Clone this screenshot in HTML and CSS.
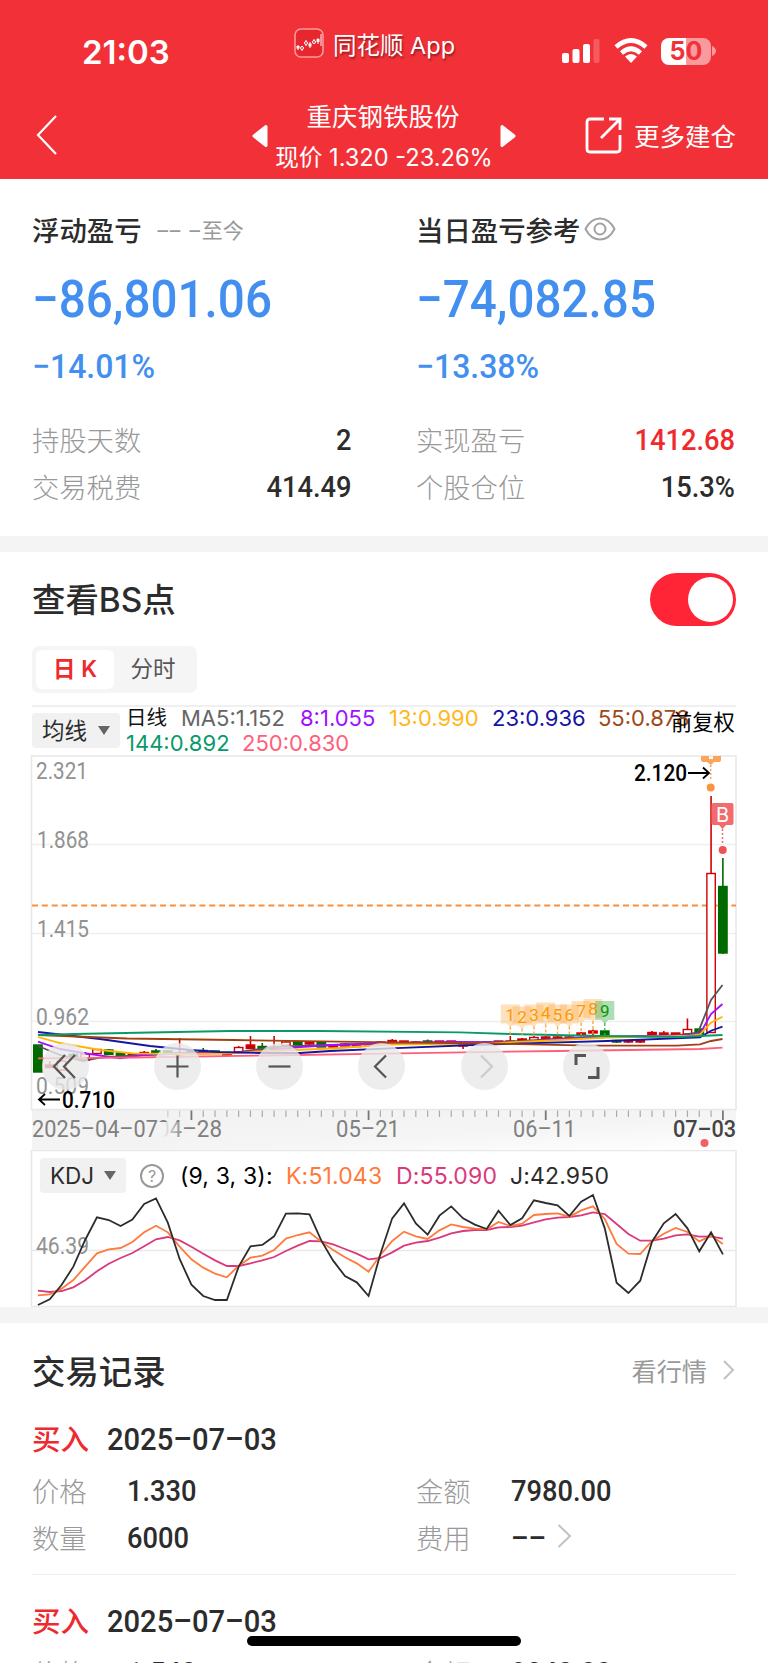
FILE: index.html
```
<!DOCTYPE html>
<html lang="zh-CN">
<head>
    <meta charset="UTF-8">
    <title>重庆钢铁股份</title>
    <link rel="stylesheet" href="styles.css">
</head>
<body>
    <header class="header">
        <div class="status">
            <div class="time">21:03</div>
            <div class="app-tag">
                <svg width="31" height="31" viewBox="0 0 31 31">
                    <rect x="1" y="1" width="28" height="28" rx="6" fill="#e8262d" stroke="#f99a9c" stroke-width="1.6"/>
                    <path d="M4 17v5M8 18v5M12 12v6M16 14v6M20 11v5M24 10v6M27 6v12" stroke="#fff" stroke-width="1"/>
                    <path d="M2.500 18h3v2.500h-3zM14.500 15.500h3v3h-3zM22.500 11h3v3h-3z" fill="#fff"/>
                    <circle cx="8" cy="20" r="1.500" fill="#e8262d" stroke="#fff"/>
                    <circle cx="12" cy="15" r="1.500" fill="#e8262d" stroke="#fff"/>
                    <circle cx="20" cy="14" r="1.500" fill="#e8262d" stroke="#fff"/>
                </svg>
                <span>同花顺 App</span>
            </div>
            <div class="signals">
                <svg width="40" height="26" viewBox="0 0 40 26">
                    <rect x="1" y="15" width="7" height="10" rx="2" fill="#fff"/>
                    <rect x="11.500" y="11" width="7" height="14" rx="2" fill="#fff"/>
                    <rect x="22" y="6" width="7" height="19" rx="2" fill="#fff"/>
                    <rect x="32.500" y="1" width="6" height="24" rx="2" fill="#f55a5f"/>
                </svg>
                <svg class="wifi" width="34" height="26" viewBox="0 0 34 26">
                    <g fill="none" stroke="#fff" stroke-width="4.600">
                        <path d="M2 9Q17-4 32 9"/>
                        <path d="M7.500 15Q17 6.500 26.500 15"/>
                    </g>
                    <path d="M11 18.500Q17 13.500 23 18.500L17 25z" fill="#fff"/>
                </svg>
                <div class="battery">50</div>
                <svg class="nub" width="4" height="10" viewBox="0 0 4 10"><path d="M0 0Q4 2 4 5T0 10z" fill="#f99a9c"/></svg>
            </div>
        </div>
        <nav class="nav">
            <svg class="back" width="22" height="42" viewBox="0 0 22 42"><path d="M20 2L2 21L20 40" fill="none" stroke="#fff" stroke-width="2.200"/></svg>
            <div class="stock">
                <svg width="17" height="22" viewBox="0 0 17 22"><path d="M14 1.500L2 11L14 20.500z" fill="#fff" stroke="#fff" stroke-width="3" stroke-linejoin="round"/></svg>
                <div class="stock-name">
                    <div class="name">重庆钢铁股份</div>
                    <div class="price">现价 1.320 -23.26%</div>
                </div>
                <svg width="17" height="22" viewBox="0 0 17 22"><path d="M3 1.500L15 11L3 20.500z" fill="#fff" stroke="#fff" stroke-width="3" stroke-linejoin="round"/></svg>
            </div>
            <div class="more">
                <svg width="38" height="38" viewBox="0 0 38 38" fill="none" stroke="#fff" stroke-width="2.800">
                    <path d="M19 2H5Q2 2 2 5V32Q2 35 5 35H32Q35 35 35 32V18M24 2H35V13M35 2L16 21"/>
                </svg>
                <span>更多建仓</span>
            </div>
        </nav>
    </header>

    <section class="summary">
        <div class="col">
            <div class="title">浮动盈亏 <span class="since"><i>–– –</i>至今</span></div>
            <div class="big"><span>−86,801.06</span></div>
            <div class="pct"><span>−14.01%</span></div>
            <div class="row"><label>持股天数</label><b>2</b></div>
            <div class="row"><label>交易税费</label><b>414.49</b></div>
        </div>
        <div class="col">
            <div class="title">当日盈亏参考
                <svg width="32" height="24" viewBox="0 0 32 24" fill="none" stroke="#a2a2a2" stroke-width="2">
                    <path d="M1.500 12C5 5 10 1.500 16 1.500S27 5 30.500 12C27 19 22 22.500 16 22.500S5 19 1.500 12z"/>
                    <circle cx="16" cy="12" r="5.500"/>
                </svg>
            </div>
            <div class="big"><span>−74,082.85</span></div>
            <div class="pct"><span>−13.38%</span></div>
            <div class="row"><label>实现盈亏</label><b class="red">1412.68</b></div>
            <div class="row"><label>个股仓位</label><b>15.3%</b></div>
        </div>
    </section>

    <section class="chart">
        <div class="chart-head">
            <h2>查看BS点</h2>
            <div class="toggle"><i></i></div>
        </div>
        <div class="tabs">
            <span class="tab active">日 K</span>
            <span class="tab">分时</span>
        </div>
        <div class="ma-bar">
            <div class="select">均线 <i></i></div>
            <div class="ma">
                <div class="ma-row">
                    <span class="w-day">日线</span>
                    <span class="w-ma5">MA5:1.152</span>
                    <span class="w-ma8">8:1.055</span>
                    <span class="w-ma13">13:0.990</span>
                    <span class="w-ma23">23:0.936</span>
                    <span class="w-ma55">55:0.878</span>
                </div>
                <div class="ma-row">
                    <span class="w-ma144">144:0.892</span>
                    <span class="w-ma250">250:0.830</span>
                </div>
            </div>
            <div class="fq">前复权</div>
        </div>

        <div class="kline">
            <svg width="768" height="395" viewBox="0 755 768 395">
                <defs>
                    <linearGradient id="axisBg" x1="0" y1="0" x2="1" y2="1">
                        <stop offset="0" stop-color="#f1f1f1"/>
                        <stop offset=".6" stop-color="#f5f5f5"/>
                        <stop offset="1" stop-color="#fff"/>
                    </linearGradient>
                    <linearGradient id="fade" x1="0" x2="1">
                        <stop offset="0" stop-color="#f3f3f3"/>
                        <stop offset=".75" stop-color="#f3f3f3"/>
                        <stop offset="1" stop-color="#f3f3f3" stop-opacity="0"/>
                    </linearGradient>
                </defs>
                <rect x="32" y="1110" width="704" height="40" fill="url(#axisBg)"/>
                <path d="M32 844.500H736M32 933.500H736M32 1021.500H736" stroke="#efefef" stroke-width="1.500"/>
                <path d="M31.500 1109.500V756H736V1109.500z" fill="none" stroke="#e8e8e8" stroke-width="1.500"/>
                <path d="M32 905.500H736" stroke="#f98f3a" stroke-width="2" stroke-dasharray="6 3.850"/>
                <g class="ylabel">
                    <text x="36" y="779" textLength="52" lengthAdjust="spacingAndGlyphs">2.321</text>
                    <text x="37" y="848" textLength="52" lengthAdjust="spacingAndGlyphs">1.868</text>
                    <text x="37" y="937" textLength="52" lengthAdjust="spacingAndGlyphs">1.415</text>
                    <text x="36" y="1025" textLength="53" lengthAdjust="spacingAndGlyphs">0.962</text>
                    <text x="36" y="1094" textLength="53" lengthAdjust="spacingAndGlyphs">0.509</text>
                </g>
                <g id="candles"></g>
                <g class="lines">
                    <polyline stroke="#555" points="38,1046 60,1055 83,1061 100,1057.700 143,1055 183,1053.500 233,1053 273,1047 300,1046 333,1045 390,1043 450,1042.500 500,1042 540,1040 590,1037 673,1036 698,1032.700 705,1015 711,1000 722.500,985"/>
                    <polyline stroke="#a010ff" points="38,1041.700 60,1049 83,1053 120,1058.300 143,1055 183,1053 233,1052.700 267,1050.700 300,1047 333,1045 400,1043 457,1042 507,1042.700 557,1039.300 607,1037 690,1035 700,1034 711,1014 722.500,1004"/>
                    <polyline stroke="#ffb400" points="38,1037 60,1043 100,1050 133,1053.300 183,1054 233,1053.300 267,1051 333,1048.500 390,1044.500 490,1043.300 540,1041 607,1037.700 690,1035.700 700,1034.300 711,1022.700 722.500,1016.700"/>
                    <polyline stroke="#1515a5" points="38,1032 100,1039 150,1046 190,1050 220,1052 260,1053 300,1053 330,1051 390,1048.300 473,1045 607,1041 700,1037.300 711,1030.700 722.500,1026.700"/>
                    <polyline stroke="#a04010" points="38,1035 127,1038.500 233,1040 390,1042.300 490,1043.500 590,1045.700 677,1045.700 700,1044.300 711,1041 722.500,1039"/>
                    <polyline stroke="#0a9a6a" points="38,1035 75,1034 150,1032.500 230,1031 320,1031 460,1032.300 510,1034 600,1036 680,1037 700,1036 722.500,1035"/>
                    <polyline stroke="#ff5f7a" points="38,1058.300 133,1057.500 267,1055.500 400,1053.300 557,1051 700,1049 722.500,1047.700"/>
                </g>
                <g id="tags"></g>
                <g id="ticks"></g>

                <path d="M701 756H709V759H713V756H721V760Q721 762 719 762H714L711 765L707 762H703Q701 762 701 760z" fill="#fda35a"/>
                <path d="M710.700 765V780" stroke="#fda35a" stroke-width="1.500" stroke-dasharray="2 2"/>
                <circle cx="710.700" cy="787.500" r="4" fill="#fb9440"/>
                <path d="M713.500 803H731.500Q733.500 803 733.500 805V823Q733.500 825 731.500 825H726L722.500 829L719 825H713.500Q711.500 825 711.500 823V805Q711.500 803 713.500 803z" fill="#f26b6e"/>
                <text class="b-tag" x="722.500" y="821.500">B</text>
                <path d="M722.500 829V845" stroke="#f26b6e" stroke-width="1.500" stroke-dasharray="2 2"/>
                <circle cx="722.700" cy="850" r="4" fill="#ef5256"/>

                <g class="extreme">
                    <text x="634" y="781" textLength="53" lengthAdjust="spacingAndGlyphs">2.120</text>
                    <path d="M688 773H709M703 767.500L709 773L703 778.500"/>
                    <text x="62" y="1108" textLength="53" lengthAdjust="spacingAndGlyphs">0.710</text>
                    <path d="M60 1099.500H39M45 1094L39 1099.500L45 1105"/>
                </g>

                <g class="xlabel">
                    <text x="157" y="1137" textLength="65" lengthAdjust="spacingAndGlyphs">04–28</text>
                    <rect x="100" y="1122" width="84" height="26" fill="url(#fade)"/>
                    <text x="32" y="1137" textLength="126" lengthAdjust="spacingAndGlyphs">2025–04–07</text>
                    <text x="336" y="1137" textLength="64" lengthAdjust="spacingAndGlyphs">05–21</text>
                    <text x="513" y="1137" textLength="63" lengthAdjust="spacingAndGlyphs">06–11</text>
                    <text class="last" x="673" y="1137" textLength="63" lengthAdjust="spacingAndGlyphs">07–03</text>
                </g>
                <circle cx="704.500" cy="1143" r="4" fill="#f26064"/>
            </svg>
            <div class="tools">
                <button class="first"><svg viewBox="0 0 47 47"><path d="M23 12L12 23.500L23 35M33 12L22 23.500L33 35"/></svg></button>
                <button><svg viewBox="0 0 47 47"><path d="M12.500 23.500H34.500M23.500 12.500V34.500"/></svg></button>
                <button><svg viewBox="0 0 47 47"><path d="M12.500 23.500H34.500"/></svg></button>
                <button><svg viewBox="0 0 47 47"><path d="M28 12.500L17 23.500L28 34.500"/></svg></button>
                <button class="off"><svg viewBox="0 0 47 47"><path d="M20 12.500L31 23.500L20 34.500"/></svg></button>
                <button class="thick"><svg viewBox="0 0 47 47"><path d="M13 22V12.500H23M35 24V34.500H25"/></svg></button>
            </div>
        </div>

        <div class="kdj">
            <div class="kdj-bar">
                <div class="select">KDJ <i></i></div>
                <div class="help">?</div>
                <span class="k-par">(9, 3, 3):</span>
                <span class="k-k">K:51.043</span>
                <span class="k-d">D:55.090</span>
                <span class="k-j">J:42.950</span>
            </div>
            <svg width="768" height="157" viewBox="0 0 768 157">
                <path d="M32 100.500H736" stroke="#e8e8e8" stroke-width="1.500"/>
                <path d="M31.500 .5H736V156.500H31.500z" fill="none" stroke="#e8e8e8" stroke-width="1.500"/>
                <g class="ylabel"><text x="36" y="104" textLength="53" lengthAdjust="spacingAndGlyphs">46.39</text></g>
                <g class="lines">
                    <polyline id="lineD" stroke="#d83a7c"/>
                    <polyline id="lineK" stroke="#ff7a3c"/>
                    <polyline id="lineJ" stroke="#2c2c2c"/>
                </g>
            </svg>
        </div>
    </section>

    <section class="trades">
        <div class="trades-head">
            <h2>交易记录</h2>
            <a>看行情 <svg width="12" height="20" viewBox="0 0 12 20"><path d="M1 1L10 10L1 19" fill="none" stroke="#c2c2c2" stroke-width="2"/></svg></a>
        </div>
        <div class="trade">
            <div class="day"><em>买入</em><b>2025–07–03</b></div>
            <div class="cells">
                <div><label>价格</label><b>1.330</b></div>
                <div><label>金额</label><b>7980.00</b></div>
                <div><label>数量</label><b>6000</b></div>
                <div><label>费用</label><b>––</b><svg class="arrow" width="15" height="24" viewBox="0 0 15 24"><path d="M1.500 1L13 12L1.500 23" fill="none" stroke="#c2c2c2" stroke-width="2"/></svg></div>
            </div>
        </div>
        <div class="trade">
            <div class="day"><em>买入</em><b>2025–07–03</b></div>
            <div class="cells">
                <div><label>价格</label><b>1.540</b></div>
                <div><label>金额</label><b>9240.00</b></div>
            </div>
        </div>
    </section>
    <div class="home-bar"></div>

    <script>
        const X0 = 37.9, STEP = 11.81;
        const RED = '#d00000', GREEN = '#006a00';

        // [indice, tipo, arriba, abajo, mecha arriba, mecha abajo]  tipo: g = verde, r = rojo, h = rojo hueco
        const candles = [
            [0,'g',1045,1072,1045,1072],[1,'r',1065,1067.500,1061,1068],[2,'h',1061,1070,1058,1070],[3,'g',1054.500,1056.500,1053,1058],
            [4,'h',1054,1060,1052,1061],[5,'h',1049.500,1053.500,1049,1054],[6,'g',1050,1054.500,1049,1055],[7,'g',1053,1056,1052,1057],
            [8,'r',1054,1055.500,1053,1056],[9,'r',1052.500,1054,1051,1055],[10,'g',1051,1053,1049,1054],[11,'g',1051,1052.500,1050,1053],
            [12,'r',1053,1054.500,1038,1058],[13,'g',1051,1053,1050,1054],[14,'g',1050.500,1052,1048,1053],[15,'g',1051,1052.500,1051,1053],
            [16,'r',1053.500,1055,1052,1056],[17,'h',1047.500,1052,1046,1053],[18,'r',1045,1048.500,1036,1049],[19,'g',1046.500,1049,1043,1050],
            [20,'r',1048,1049.500,1036,1050],[21,'h',1042,1045.500,1041,1046],[22,'g',1041.500,1044.500,1041,1045],[23,'r',1042,1044,1041,1045],
            [24,'g',1042.500,1047,1042,1047],[25,'r',1045.500,1047,1045,1047],[26,'r',1044,1046,1043,1046],[27,'r',1045,1046.500,1044,1047],
            [28,'r',1043.500,1045,1043,1046],[29,'h',1042,1043.500,1042,1045],[30,'r',1040.500,1042.500,1039,1043],[31,'r',1041,1042.500,1041,1043],
            [32,'r',1042,1043,1041,1043],[33,'g',1041,1042,1039.500,1043],[34,'r',1041,1042,1041,1043],[35,'r',1041,1042,1041,1043],
            [36,'r',1044.500,1046,1042,1049],[37,'r',1043,1044,1042,1045],[38,'r',1042,1043,1041,1044],[39,'r',1041,1042,1041,1043],
            [40,'r',1041,1042,1036,1042],[41,'r',1039,1041.500,1038,1042],[42,'h',1037.500,1041,1036,1041],[43,'r',1037,1039,1036,1040],
            [44,'r',1037,1038.500,1036,1039],[45,'r',1037,1038.500,1036,1039],[46,'r',1033,1035,1032,1036],[47,'r',1031,1033,1029.500,1035.500],
            [48,'g',1031,1034.500,1030,1035],[49,'g',1040.500,1042,1040,1043],[50,'r',1040.500,1042,1040,1043],[51,'r',1040.500,1042,1039,1043],
            [52,'r',1032.500,1035.500,1031,1036],[53,'r',1033,1035,1031,1036],[54,'r',1033,1034.500,1033,1035],[55,'h',1029.500,1034,1018.500,1034],
            [56,'g',1029,1034,1029,1034],[57,'h',873.500,1032.500,796,1033],[58,'g',886.500,953,858,954]
        ];
        document.getElementById('candles').innerHTML = candles.map(([i, t, a, b, wa, wb]) => {
            const x = X0 + STEP * i;
            const color = t === 'g' ? GREEN : RED;
            return `<path d="M${x} ${wa}V${wb}" stroke="${color}" stroke-width="1.6"/>` +
                `<rect x="${x - 4.2}" y="${a}" width="8.4" height="${b - a}" fill="${t === 'h' ? '#fff' : color}" stroke="${color}" stroke-width="1.4"/>`;
        }).join('');

        // etiquetas 1-9
        const tops = [1004.5, 1006.5, 1004.5, 1002.5, 1004.5, 1004.5, 1001, 999, 1001];
        document.getElementById('tags').innerHTML = tops.map((y, n) => {
            const x = X0 + STEP * (40 + n);
            const c = n === 8 ? '#40b04a' : '#fba53a';
            return `<path d="M${x - 9.5} ${y}h19v19h-6l-3.5 4l-3.500 -4h-6z" fill="${c}" fill-opacity="${n === 8 ? .42 : .33}"/>` +
                `<path d="M${x} ${y + 22}V${1035}" stroke="${c}" stroke-width="1.3" stroke-dasharray="3 2"/>` +
                `<text class="tag-num" x="${x}" y="${y + 16}" fill="${n === 8 ? '#0a960a' : '#ff9800'}">${n + 1}</text>`;
        }).join('');

        let ticks = '';
        for (let i = 11; i < 59; i++) {
            const big = i % 15 === 13;
            ticks += `<path d="M${X0 + STEP * i} 1110.500V${big ? 1120 : 1117}" stroke="${big ? '#777' : '#aaa'}" stroke-width="${big ? 1.8 : 1.2}" opacity="${i < 13 ? .5 : 1}"/>`;
        }
        document.getElementById('ticks').innerHTML = ticks;

        const kdj = {
            lineJ: [495,478,435,380,300,232,240,258,239,192,175,248,357,434,468,480,480,380,319,315,289,221,220,223,302,362,408,427,468,342,235,190,250,284,227,199,235,254,267,212,255,235,181,189,196,228,185,165,265,428,459,422,305,250,222,265,334,277,343],
            lineK: [466,463,446,420,380,340,328,324,306,277,257,277,320,358,383,401,412,377,353,347,330,296,285,277,305,330,352,370,395,345,303,275,289,297,271,253,261,266,268,246,258,251,225,222,220,230,211,199,237,312,341,342,303,281,264,276,304,287,312],
            lineD: [452,456,453,442,421,394,371,354,339,319,298,291,301,320,341,361,378,378,370,361,351,333,317,303,304,313,327,341,358,354,337,317,308,303,293,280,273,270,270,262,261,257,247,238,233,231,226,217,222,252,282,302,302,296,286,283,290,289,296]
        };
        for (const id in kdj) {
            document.getElementById(id).setAttribute('points',
                kdj[id].map((v, i) => `${X0 + STEP * i},${v / 3 - 10}`).join(' '));
        }
    </script>
</body>
</html>
```
FILE: styles.css
```
* {
    box-sizing: border-box;
}
body {
    margin: 0;
    width: 768px;
    height: 1663px;
    overflow: hidden;
    background-color: #fff;
    color: #2c2c2c;
    font-family: Inter, "Noto Sans CJK SC", sans-serif;
}
svg {
    display: block;
    flex-shrink: 0;
}
h2 {
    margin: 0;
    padding-bottom: 4px;
    font-size: 33.4px;
    font-weight: 500;
}
b, label, em {
    font-style: normal;
}

/* cabecera */
.header {
    height: 179px;
    background-color: #f23038;
    color: #fff;
}
.status {
    display: grid;
    grid-template-columns: 294px 267px 1fr;
    height: 92px;
}
.time {
    padding: 32px 0 0 82px;
    font-size: 33px;
    font-weight: 600;
    line-height: 40px;
}
.app-tag {
    display: flex;
    align-items: center;
    gap: 8px;
    height: 29px;
    margin-top: 29px;
    font-size: 23.5px;
    white-space: nowrap;
    text-shadow: 1px 2px 2px rgba(0, 0, 0, 0.4);
}
.signals {
    display: flex;
    align-items: center;
    height: 28px;
    margin-top: 37px;
}
.wifi {
    margin: 0 13px 0 13px;
}
.battery {
    width: 50px;
    height: 27px;
    border-radius: 8px;
    background: linear-gradient(90deg, #fff 50%, #f99a9c 50%);
    color: #f23038;
    font-size: 25px;
    font-weight: 700;
    line-height: 27px;
    text-align: center;
}
.nub {
    margin-left: 1px;
}
.nav {
    display: grid;
    grid-template-columns: 252px 264px 1fr;
    height: 87px;
}
.back {
    margin: 22px 0 0 36px;
}
.stock {
    display: flex;
    justify-content: space-between;
    white-space: nowrap;
}
.stock > svg {
    margin-top: 33px;
}
.stock-name {
    width: 216px;
    text-align: center;
}
.name {
    margin: 6px 2px 0 0;
    font-size: 25.5px;
    line-height: 38px;
}
.price {
    margin: 4px -10px 0;
    font-size: 23.6px;
    line-height: 36px;
}
.more {
    display: flex;
    align-items: center;
    gap: 11px;
    height: 38px;
    margin: 25px 0 0 69px;
    font-size: 25.5px;
    white-space: nowrap;
}
.more span {
    padding-bottom: 3px;
}

/* resumen */
.summary {
    display: grid;
    grid-template-columns: 319px 319px;
    column-gap: 65px;
    height: 373px;
    padding: 30px 32px 0;
    border-bottom: 16px solid #f4f4f4;
}
.title {
    display: flex;
    align-items: center;
    height: 40px;
    font-size: 27.4px;
    font-weight: 500;
    white-space: nowrap;
}
.title svg {
    margin-left: 4px;
}
.since {
    margin-left: 16px;
    color: #999;
    font-size: 21px;
    font-weight: 400;
}
.since i {
    font-style: normal;
    letter-spacing: 1.7px;
}
.big, .pct, .row b, .day b, .cells b {
    font-family: Roboto, "Liberation Sans", sans-serif;
    font-weight: 500;
}
.big {
    height: 78px;
    margin-top: 12px;
    color: #438ff0;
    font-size: 52px;
    line-height: 78px;
}
.pct {
    height: 50px;
    margin-top: 0;
    color: #438ff0;
    font-size: 34px;
    line-height: 54px;
}
.big span, .pct span, .row b, .day b, .cells b {
    display: inline-block;
    transform: scaleX(0.94);
    transform-origin: left;
}
.big span {
    transform: scaleX(0.915);
}
.row {
    display: flex;
    align-items: center;
    justify-content: space-between;
    height: 47px;
}
.pct + .row {
    margin-top: 27px;
}
.row label, .cells label {
    padding-bottom: 2px;
    color: #999;
    font-size: 27.3px;
    font-weight: 300;
}
.row b {
    font-size: 29px;
    transform-origin: right;
}
.row b.red {
    color: #ee2a2e;
}

/* grafico */
.chart-head {
    display: flex;
    align-items: center;
    justify-content: space-between;
    height: 94px;
    padding: 0 32px;
}
.toggle {
    display: flex;
    justify-content: flex-end;
    width: 86px;
    height: 53px;
    padding: 4px 3px;
    border-radius: 27px;
    background-color: #ff2536;
}
.toggle i {
    width: 45px;
    height: 45px;
    border-radius: 50%;
    background-color: #fff;
}
.tabs {
    display: flex;
    width: 165px;
    height: 47px;
    margin-left: 32px;
    padding: 4px;
    border-radius: 7px;
    background-color: #f5f5f5;
}
.tab {
    width: 78px;
    color: #555;
    font-size: 22.5px;
    line-height: 38px;
    text-align: center;
}
.tab.active {
    border-radius: 6px;
    background-color: #fff;
    color: #ee2a2e;
    font-weight: 600;
}
.ma-bar {
    display: flex;
    width: 704px;
    height: 50px;
    margin: 12px 0 0 32px;
    border-top: 2px solid #f0f0f0;
}
.select {
    display: flex;
    flex-shrink: 0;
    align-items: center;
    justify-content: space-between;
    width: 88px;
    height: 35px;
    margin-top: 6px;
    padding: 0 10px;
    border-radius: 4px;
    background-color: #f1f1f1;
    font-size: 22.5px;
    line-height: 32px;
}
.select i {
    border: 6px solid transparent;
    border-top: 9px solid #666;
    border-bottom: 0;
}
.ma {
    flex-shrink: 0;
    width: 551px;
    padding-left: 6px;
    font-size: 22px;
}
.ma-row {
    display: flex;
    height: 25px;
    line-height: 22px;
    white-space: nowrap;
}
.ma-row span {
    flex-shrink: 0;
}
.w-day { width: 55px; color: #111; font-size: 20.5px; }
.w-ma5 { width: 119px; color: #666; }
.w-ma8 { width: 89px; color: #a010ff; }
.w-ma13 { width: 103px; color: #ffb81c; }
.w-ma23 { width: 106px; color: #1515a5; }
.w-ma55 { color: #a04818; }
.w-ma144 { width: 116px; color: #0a9a6a; }
.w-ma250 { color: #ff5f7a; }
.fq {
    flex-shrink: 0;
    color: #000;
    font-size: 21.2px;
    line-height: 30px;
    white-space: nowrap;
}
.kline {
    position: relative;
    height: 395px;
}
.ylabel text, .xlabel text, .extreme text {
    font-family: Roboto, "Liberation Sans", sans-serif;
    font-size: 23.5px;
}
.ylabel text {
    fill: #929292;
}
.xlabel text {
    fill: #808080;
}
.xlabel .last {
    fill: #444;
    font-weight: 500;
}
.extreme text {
    fill: #000;
    font-weight: 500;
}
.extreme path {
    fill: none;
    stroke: #000;
    stroke-width: 1.8;
}
.lines polyline {
    fill: none;
    stroke-width: 1.8;
}
.b-tag {
    fill: #fff;
    font-size: 20px;
    text-anchor: middle;
}
.tag-num {
    font-family: Roboto, sans-serif;
    font-size: 17px;
    text-anchor: middle;
}
/* botones encima de las velas */
.tools {
    position: absolute;
    left: 42px;
    top: 288px;
    display: flex;
    gap: 55.3px;
}
.tools button {
    width: 47px;
    height: 47px;
    padding: 0;
    border: none;
    border-radius: 50%;
    background-color: rgba(232, 232, 232, 0.8);
}
.tools .first {
    margin-right: 9.5px;
}
.tools path {
    fill: none;
    stroke: #555;
    stroke-width: 2.2;
}
.tools .off path {
    stroke: #ccc;
}
.tools .thick path {
    stroke-width: 3;
}
.kdj {
    height: 173px;
    border-bottom: 16px solid #f4f4f4;
}
.kdj-bar {
    position: absolute;
    display: flex;
    align-items: center;
    padding: 8px 0 0 40px;
    font-size: 23px;
    white-space: nowrap;
}
.kdj-bar .select {
    width: 86px;
    margin: 0 14px 0 0;
}
.kdj-bar span {
    flex-shrink: 0;
    letter-spacing: 0.15px;
}
.help {
    width: 24px;
    height: 24px;
    margin-right: 16px;
    border: 2px solid #999;
    border-radius: 50%;
    color: #999;
    font-size: 16px;
    line-height: 20px;
    text-align: center;
}
.k-par { width: 106px; color: #000; }
.k-k { width: 110px; color: #ff7a3c; }
.k-d { width: 114px; color: #d83a7c; }
.k-j { color: #2c2c2c; }

/* operaciones */
.trades {
    padding: 0 32px;
}
.trades-head {
    display: flex;
    align-items: center;
    justify-content: space-between;
    height: 96px;
}
.trades-head a {
    display: flex;
    align-items: center;
    gap: 16px;
    padding: 0 1px 2px 0;
    color: #999;
    font-size: 25.2px;
}
.trade {
    height: 155px;
}
.trade + .trade {
    height: 89px;
    overflow: hidden;
    border-top: 1px solid #efefef;
}
.day {
    display: flex;
    align-items: center;
    height: 40px;
}
.trade + .trade .day {
    margin-top: 26px;
}
.day em {
    width: 75px;
    padding-bottom: 3px;
    color: #ee2a2e;
    font-size: 28.5px;
    font-weight: 500;
}
.day b {
    font-size: 31px;
}
.cells {
    display: grid;
    grid-template-columns: 384px 1fr;
    grid-auto-rows: 47px;
    margin-top: 8px;
}
.cells > div {
    display: flex;
    align-items: center;
}
.cells label {
    width: 95px;
}
.cells b {
    font-size: 29px;
}
.arrow {
    margin: 0 0 3px 9px;
}
.home-bar {
    position: fixed;
    left: 247px;
    top: 1636px;
    width: 274px;
    height: 10px;
    border-radius: 5px;
    background-color: #000;
}
```
